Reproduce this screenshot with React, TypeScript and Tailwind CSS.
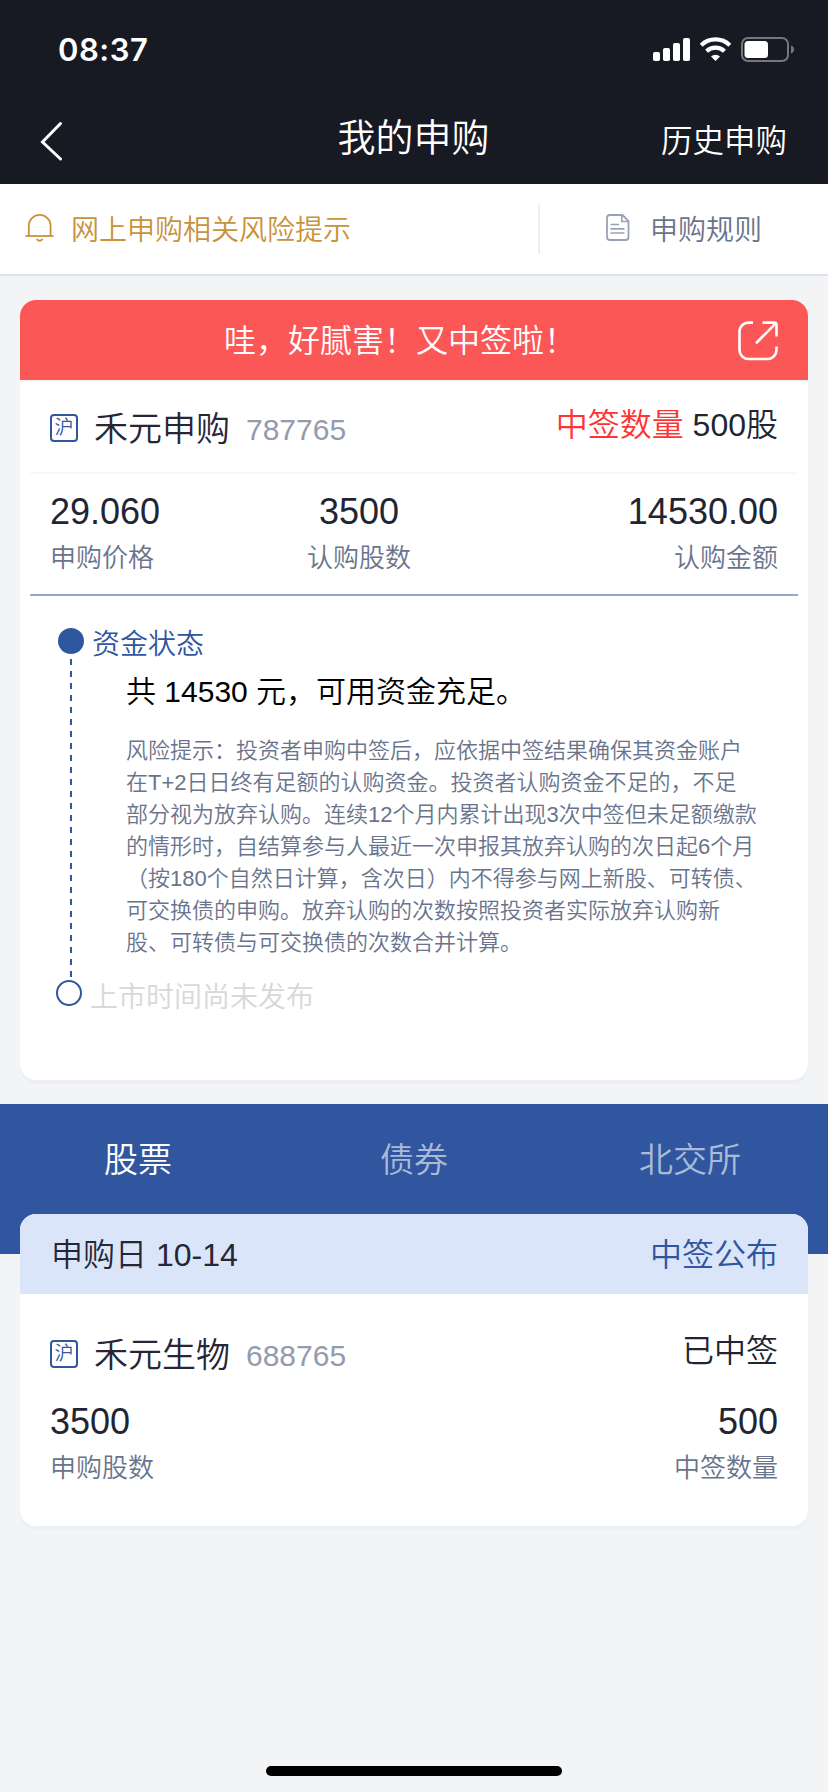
import React from "react";
import { twMerge } from "tailwind-merge";

const tabs = [
    { title: "股票", active: true },
    { title: "债券", active: false },
    { title: "北交所", active: false },
];

const stats = [
    { value: "29.060", label: "申购价格", align: "items-start" },
    { value: "3500", label: "认购股数", align: "items-center" },
    { value: "14530.00", label: "认购金额", align: "items-end" },
];

const riskLines = [
    "风险提示：投资者申购中签后，应依据中签结果确保其资金账户",
    "在T+2日日终有足额的认购资金。投资者认购资金不足的，不足",
    "部分视为放弃认购。连续12个月内累计出现3次中签但未足额缴款",
    "的情形时，自结算参与人最近一次申报其放弃认购的次日起6个月",
    "（按180个自然日计算，含次日）内不得参与网上新股、可转债、",
    "可交换债的申购。放弃认购的次数按照投资者实际放弃认购新",
    "股、可转债与可交换债的次数合并计算。",
];

function StatusIcons() {
    return (
        <svg width="142" height="26" viewBox="0 0 142 26" fill="none">
            <g fill="#fff">
                <rect x="0" y="16" width="7" height="9" rx="1.8" />
                <rect x="10" y="12" width="7" height="13" rx="1.8" />
                <rect x="20" y="7" width="7" height="18" rx="1.8" />
                <rect x="30" y="2" width="7" height="23" rx="1.8" />
                <path d="M62.5 25 L58 20.6 A6.4 6.4 0 0 1 67 20.6 Z" />
            </g>
            <path d="M48.2 9.2 A20.6 20.6 0 0 1 76.8 9.2" stroke="#fff" strokeWidth="4.2" />
            <path d="M53.6 15.2 A12.8 12.8 0 0 1 71.4 15.2" stroke="#fff" strokeWidth="4.2" />
            <rect x="89" y="2" width="46" height="23" rx="6" stroke="#75777e" strokeWidth="2" />
            <rect x="91.5" y="5" width="23.5" height="17" rx="3.5" fill="#fff" />
            <path d="M138 9.5 C142 10.5 142 16.5 138 17.5 Z" fill="#75777e" />
        </svg>
    );
}

function BellIcon() {
    return (
        <svg width="30" height="30" viewBox="0 0 30 30" fill="none" stroke="#c8923a" strokeWidth="1.8">
            <path d="M0.5 22 H28.5" />
            <path d="M3.8 21.8 V11.6 A10.8 10.6 0 0 1 25.6 11.6 V21.8" />
            <path d="M11.8 24.8 C12.6 27.4 16.6 27.4 17.4 24.8" />
        </svg>
    );
}

function RulesIcon() {
    return (
        <svg className="-mt-0.5" width="24" height="28" viewBox="0 0 24 28" fill="none" stroke="#99a1b5" strokeWidth="1.8">
            <path d="M16.5 1 H4 A3 3 0 0 0 1 4 V23 A3 3 0 0 0 4 26 H19.5 A3 3 0 0 0 22.5 23 V7 Z" />
            <path d="M15.8 1.5 V7.5 H22" strokeWidth="1.6" />
            <path d="M4.5 10.5 H13 M4.5 14.8 H18.5 M4.5 19 H18.5" strokeWidth="1.7" />
        </svg>
    );
}

function ShareIcon() {
    return (
        <svg width="40" height="40" viewBox="0 0 40 40" fill="none" stroke="#fff" strokeWidth="2.6">
            <path d="M15 1.6 H10.5 A9 9 0 0 0 1.5 10.6 V29 A9 9 0 0 0 10.5 38 H29.5 A9 9 0 0 0 38.5 29 V25.5" />
            <path d="M24.5 1.6 H36.5 A2 2 0 0 1 38.5 3.6 V15.5" />
            <path d="M18.8 21.5 L37.5 2.6" strokeLinecap="round" />
        </svg>
    );
}

function StockName({ name, code }: { name: string; code: string }) {
    return (
        <div className="flex items-center h-11">
            <span className="flex items-center justify-center w-7 h-7 border-2 border-[#2f569f] rounded-[4px] text-[19px] leading-none pb-0.5 text-[#2f569f]">
                沪
            </span>
            <span className="ml-4 mt-0.5 text-[34px] text-[#272636]">{name}</span>
            <span className="ml-4 mt-0.5 text-[30px] text-[#949bad]">{code}</span>
        </div>
    );
}

function Stat({ value, label, align }: { value: string; label: string; align: string }) {
    return (
        <div className={twMerge("flex flex-col", align)}>
            <span className="text-[36px] leading-[46px] text-[#1f2533]">{value}</span>
            <span className="text-[26px] leading-[46px] text-[#69748c]">{label}</span>
        </div>
    );
}

function App() {
    return (
        <div className="flex flex-col w-[828px] h-[1792px] bg-[#f3f4f6] font-['Liberation_Sans','Noto_Sans_CJK_SC',sans-serif] font-[350] whitespace-nowrap">
            <header className="h-[184px] bg-[#171a23] text-white">
                <div className="flex justify-between h-[98px] pt-9 pl-[58px] pr-[33px]">
                    <span className="font-['Inter',sans-serif] font-semibold text-[31px] leading-[27px] tracking-[0.5px]">
                        08:37
                    </span>
                    <StatusIcons />
                </div>
                <div className="grid grid-cols-[1fr_auto_1fr] items-center h-[79px] pl-10 pr-[41px]">
                    <svg width="24" height="42" viewBox="0 0 24 42" fill="none" stroke="#fff" strokeWidth="3" strokeLinecap="round">
                        <path d="M20.5 5.5 L2.5 24 L20.5 41" transform="translate(0 -1)" />
                    </svg>
                    <h1 className="text-[38px] leading-[77px] -mt-0.5">我的申购</h1>
                    <span className="text-right text-[31.5px] leading-[79px] mt-1">历史申购</span>
                </div>
            </header>

            <div className="flex shrink-0 items-center h-[90px] bg-white shadow-[0_2px_0_#dfe2e8]">
                <div className="flex items-center w-[538px] pl-[25px] text-[28px] text-[#c8923a]">
                    <BellIcon />
                    <span className="ml-4 mt-1">网上申购相关风险提示</span>
                </div>
                <div className="w-0.5 h-[50px] bg-[#eeeff1]" />
                <div className="flex items-center pl-[66px] text-[28px] text-[#69748c]">
                    <RulesIcon />
                    <span className="ml-5 mt-1">申购规则</span>
                </div>
            </div>

            <section className="shrink-0 h-[780px] mt-[26px] mx-5 bg-white rounded-2xl overflow-hidden shadow-[0_4px_0_#eceff6]">
                <div className="flex items-center justify-between h-[82px] pt-0.5 pl-[204px] pr-[30px] bg-[#fc5757] bg-clip-padding border-b-2 border-[#f3f4f8] text-white">
                    <span className="text-[32px]">哇，好腻害！又中签啦！</span>
                    <ShareIcon />
                </div>
                <div className="flex justify-between h-[90px] px-[30px] pt-6">
                    <StockName name="禾元申购" code="787765" />
                    <div className="text-[32px] leading-[38px] text-[#1f2533]">
                        <span className="text-[#ff3333]">中签数量</span> 500股
                    </div>
                </div>
                <div className="mx-2.5 px-5 h-[124px] pt-[15px] grid grid-cols-[257px_104px_1fr] border-t-2 border-b-2 border-t-[#f7f8fc] border-b-[#93a8cf]">
                    {stats.map((stat) => (
                        <Stat key={stat.label} {...stat} />
                    ))}
                </div>

                <div className="flex mt-8 pl-9">
                    <div className="flex flex-col items-center w-7">
                        <div className="w-[26px] h-[26px] ml-0.5 rounded-full bg-[#2f579f]" />
                        <div className="w-0.5 h-[318px] ml-0.5 mt-[5px] mb-[3px] bg-[repeating-linear-gradient(to_bottom,#2f579f_0_6px,transparent_6px_12px)]" />
                        <div className="w-[26px] h-[26px] mr-0.5 rounded-full border-2 border-[#2f579f]" />
                    </div>
                    <div>
                        <p className="pl-2 mt-px text-[28px] leading-8 text-[#2f569f]">资金状态</p>
                        <p className="pl-[42px] mt-[15px] text-[30px] leading-8 text-black">共 14530 元，可用资金充足。</p>
                        <p className="pl-[42px] mt-[27px] text-[22px] leading-8 text-[#69748c]">
                            {riskLines.map((line) => (
                                <span key={line} className="block">{line}</span>
                            ))}
                        </p>
                        <p className="pl-1.5 mt-[23px] text-[28px] leading-8 text-[#d8d8d8]">上市时间尚未发布</p>
                    </div>
                </div>
            </section>

            <nav className="shrink-0 grid grid-cols-3 h-[150px] mt-6 bg-[#2f569e] text-center text-[34px] leading-[113px]">
                {tabs.map(({ title, active }) => (
                    <span key={title} className={twMerge("text-white/60", active && "text-white")}>
                        {title}
                    </span>
                ))}
            </nav>

            <section className="relative shrink-0 h-[312px] -mt-10 mx-5 bg-white rounded-2xl overflow-hidden shadow-[0_4px_0_#eceff6]">
                <div className="flex items-center justify-between h-20 pt-0.5 pl-[31px] pr-[30px] bg-[#dbe5f9] text-[32px]">
                    <span className="text-[#272636]">申购日 10-14</span>
                    <span className="text-[#2f569e]">中签公布</span>
                </div>
                <div className="flex justify-between px-[30px] pt-[38px]">
                    <StockName name="禾元生物" code="688765" />
                    <span className="text-[32px] leading-[38px] text-[#1f2533]">已中签</span>
                </div>
                <div className="flex justify-between px-[30px] mt-[23px]">
                    <Stat value="3500" label="申购股数" align="items-start" />
                    <Stat value="500" label="中签数量" align="items-end" />
                </div>
            </section>

            <div className="w-[296px] h-2.5 mt-auto mb-4 mx-auto rounded-full bg-black" />
        </div>
    );
}

export default App;
